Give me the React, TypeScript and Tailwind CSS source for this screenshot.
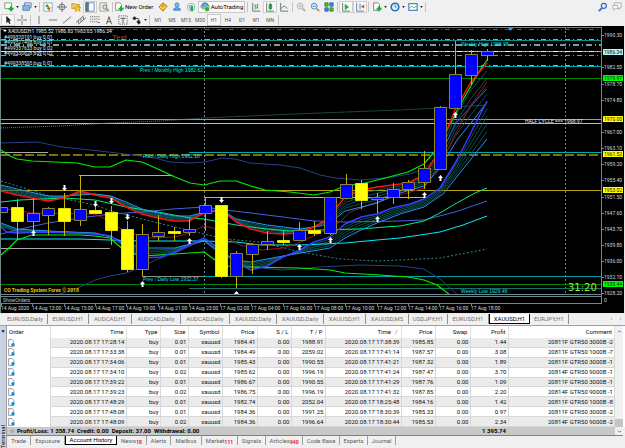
import type { ReactNode } from 'react';
import clsx from 'clsx';

type Point = [number, number];

interface Candle {
  x: number;
  open: number;
  close: number;
  high: number;
  low: number;
  up: boolean;
}

// [x, body top, body bottom, wick top, wick bottom, bullish]
const candleRows: [number, number, number, number, number, number][] = [
  [1, 208, 212, 207, 213, 1],
  [17, 208, 221, 199, 240, 0],
  [33, 214, 221, 198, 232, 1],
  [48, 209, 215, 207, 235, 1],
  [64, 209, 221, 193, 236, 0],
  [80, 210, 220, 175, 226, 1],
  [95, 211, 213, 203, 213, 0],
  [111, 213, 230, 206, 245, 0],
  [127, 230, 269, 221, 272, 0],
  [142, 235, 269, 224, 276, 1],
  [158, 233, 236, 215, 241, 1],
  [174, 232, 233, 227, 241, 0],
  [189, 230, 232, 219, 236, 1],
  [205, 206, 213, 198, 231, 1],
  [221, 206, 276, 205, 278, 0],
  [236, 254, 276, 251, 288, 1],
  [252, 245, 254, 243, 274, 1],
  [267, 242, 244, 231, 250, 1],
  [283, 241, 242, 231, 245, 0],
  [299, 231, 240, 222, 241, 1],
  [314, 231, 233, 221, 236, 0],
  [330, 198, 233, 197, 235, 1],
  [346, 185, 198, 174, 199, 1],
  [361, 184, 200, 180, 209, 0],
  [377, 198, 199, 193, 213, 1],
  [393, 190, 197, 183, 204, 1],
  [408, 183, 189, 180, 199, 1],
  [424, 169, 182, 151, 189, 1],
  [440, 108, 169, 106, 170, 1],
  [455, 75, 108, 41, 109, 1],
  [471, 55, 75, 50, 85, 1],
  [487, 52, 55, 49, 61, 1],
];

const candles: Candle[] = candleRows.map(([x, open, close, high, low, up]) => ({
  x, open, close, high, low, up: up === 1,
}));

const upperBand: Point[] = [[1, 143], [37, 142], [62, 147], [100, 151], [125, 154], [155, 158], [170, 162], [190, 163], [205, 162], [222, 158], [235, 159], [250, 163], [280, 165], [300, 168], [320, 175], [335, 178], [361, 180], [385, 178], [410, 174], [424, 169], [434, 160]];
const lowerBand: Point[] = [[57, 295], [80, 287], [95, 280], [110, 276], [126, 273], [142, 267], [155, 260], [175, 253], [190, 246], [204, 240], [220, 252], [236, 262], [251, 267], [283, 270], [320, 267], [360, 265], [400, 266], [424, 269], [440, 279], [458, 295]];
const greenTop: Point[] = [[1, 150], [8, 155], [17, 159], [32, 161], [77, 163], [95, 167], [110, 167], [126, 160], [142, 162], [160, 170], [175, 177], [190, 183], [204, 185], [220, 181], [236, 181], [251, 186], [265, 190], [290, 192], [314, 195], [330, 192], [345, 186], [365, 183], [385, 178], [408, 172], [424, 164], [434, 152], [447, 130], [460, 105], [480, 70], [487, 60]];
const greenBottom: Point[] = [[1, 255], [10, 247], [17, 240], [32, 235], [80, 235], [95, 236], [110, 238], [126, 252], [142, 256], [175, 254], [204, 252], [215, 260], [225, 266], [251, 267], [300, 268], [330, 270], [345, 273], [380, 275], [408, 277], [424, 280], [437, 285], [450, 295]];
const redFast: Point[] = [[1, 191], [17, 195], [32, 198], [48, 201], [64, 198], [80, 191], [95, 195], [111, 198], [126, 207], [142, 214], [158, 218], [173, 221], [189, 221], [204, 213], [222, 210], [236, 222], [251, 229], [267, 233], [283, 234], [298, 233], [314, 227], [325, 221], [336, 208], [345, 197], [361, 190], [377, 187], [408, 183], [424, 175], [440, 150], [447, 130], [455, 110], [471, 82], [487, 63]];
const redSlow: Point[] = [[1, 208], [32, 213], [95, 214], [111, 222], [126, 232], [150, 238], [175, 237], [190, 233], [204, 226], [213, 228], [225, 237], [240, 245], [262, 250], [283, 248], [298, 243], [320, 233], [340, 222], [350, 212], [377, 202], [400, 195], [424, 188], [440, 165], [455, 135], [471, 105], [487, 82]];
const springGreen: Point[] = [[1, 202], [20, 200], [64, 198], [95, 200], [126, 207], [158, 212], [190, 218], [204, 219], [236, 225], [267, 229], [290, 231], [320, 230], [360, 229], [385, 227], [400, 226], [424, 221], [440, 213], [455, 204], [475, 193], [487, 188]];
const cyanSlow: Point[] = [[1, 239], [80, 239], [110, 240], [142, 241], [204, 241], [236, 242], [260, 245], [300, 245], [345, 243], [377, 240], [400, 238], [440, 232], [463, 225], [487, 216]];
const steelBlue: Point[] = [[1, 234], [25, 228], [48, 223], [80, 218], [111, 214], [142, 212], [173, 209], [204, 207], [225, 210], [251, 213], [283, 217], [314, 221], [345, 222], [400, 221], [424, 220], [455, 212], [487, 201]];
const steelFast: Point[] = [[434, 170], [445, 145], [457, 122], [471, 106], [487, 89]];
const ribbonTop: Point[] = [[1, 185], [17, 189], [48, 196], [64, 196], [95, 194], [111, 196], [126, 202], [142, 209], [158, 213], [175, 216], [190, 216], [204, 212], [222, 210], [236, 219], [267, 225], [300, 229], [320, 226], [330, 223], [345, 211], [377, 203], [400, 193], [424, 186], [440, 168], [457, 140], [475, 118], [487, 102]];
const ribbonBlue: Point[] = [[1, 227], [7, 232], [17, 233], [48, 232], [95, 234], [111, 236], [126, 247], [142, 258], [160, 257], [175, 252], [204, 238], [220, 249], [236, 262], [251, 270], [267, 266], [283, 257], [298, 251], [314, 242], [330, 237], [345, 224], [361, 217], [377, 214], [392, 208], [410, 204], [424, 199], [440, 188], [457, 160], [487, 101]];
const ribbonLow: Point[] = [[1, 223], [17, 229], [48, 231], [95, 233], [111, 237], [126, 243], [142, 248], [175, 248], [190, 244], [204, 241], [220, 253], [236, 260], [251, 262], [283, 256], [330, 248], [345, 238], [361, 230], [377, 223], [400, 214], [424, 207], [443, 194], [487, 139]];
const dotsTop: Point[] = [[1, 128], [60, 126], [110, 123], [160, 121], [204, 118], [250, 116], [320, 113], [400, 110], [440, 108], [487, 105]];
const dotsBottom: Point[] = [[1, 181], [50, 196], [95, 205], [111, 211], [150, 221], [204, 234], [225, 239], [260, 242], [300, 252], [340, 259], [377, 261], [400, 260], [440, 258], [487, 249]];

const toPath = (points: Point[]) => points.map((p) => p.join(',')).join(' ');

const valueAt = (points: Point[], x: number) => {
  const i = points.findIndex((p) => p[0] >= x);
  if (i <= 0) return points[0][1];
  const [x0, y0] = points[i - 1];
  const [x1, y1] = points[i];
  return y0 + ((y1 - y0) * (x - x0)) / (x1 - x0);
};

// averages that run between two moving averages
const between = (a: Point[], b: Point[], t: number): Point[] =>
  candles.map(({ x }) => [x, Math.round((valueAt(a, x) * (1 - t) + valueAt(b, x) * t) * 10) / 10]);

const prices: [string, number][] = [
  ['1990.30', 35], ['1982.50', 67], ['1978.70', 84], ['1974.80', 100], ['1967.00', 132],
  ['1963.10', 148], ['1959.20', 164], ['1955.40', 180], ['1951.50', 197], ['1947.60', 213], ['1943.70', 229],
  ['1939.80', 245], ['1936.00', 261], ['1932.10', 277], ['1928.20', 293],
];

const priceTags: [string, number, string][] = [
  ['1986.34', 52, '#b0f0f8'],
  ['1979.97', 78, '#00ff00'],
  ['1970.00', 119, '#ffff00'],
  ['1961.52', 154, '#ffff00'],
  ['1953.02', 190, '#ffff00'],
  ['1930.44', 284, '#00ff00'],
];

const times = [
  '14 Aug 2020', '14 Aug 13:00', '14 Aug 15:00', '14 Aug 17:00', '14 Aug 19:00', '14 Aug 21:00', '14 Aug 23:00',
  '17 Aug 02:00', '17 Aug 04:00', '17 Aug 06:00', '17 Aug 08:00', '17 Aug 10:00', '17 Aug 12:00', '17 Aug 14:00',
  '17 Aug 16:00', '17 Aug 18:00',
];

const orders: [string, number][] = [
  ['#499320191 buy 0.01', 37],
  ['#499327498 buy 0.01', 42],
  ['#499337633 buy 0.02', 48],
  ['#499330628 buy 0.02', 53],
  ['#499338595 buy 0.01', 63],
];

const levels: { y: number; x1?: number; x2?: number; color: string; dash?: string; width?: number }[] = [
  { y: 29.5, color: '#a83c14', dash: '5 3 1 3' },
  { y: 40.5, color: '#0c8c8c' },
  { y: 39.5, color: '#8fb0b0', dash: '5 3 1 3' },
  { y: 45, color: '#7d9c9c', dash: '6 3 1 3', width: 2 },
  { y: 51.5, color: '#68b4d0' },
  { y: 51.5, color: '#d8f4ff', dash: '5 3 1 3' },
  { y: 55.5, color: '#7d9c9c', dash: '5 3 1 3' },
  { y: 65.5, color: '#8fb0b0', dash: '5 3 1 3' },
  { y: 66.5, color: '#00a8a8' },
  { y: 78.5, color: '#008400' },
  { y: 119.5, color: '#b8a810' },
  { y: 123.5, color: '#c0b8c0' },
  { y: 152.5, x2: 48, color: '#a8a8a8' },
  { y: 152.5, x1: 189, color: '#00a8b0' },
  { y: 155, color: '#7c7400', dash: '9 3', width: 2 },
  { y: 175.5, x1: 79, x2: 173, color: '#b0b0b0' },
  { y: 190.5, color: '#b8a810' },
  { y: 197.5, x1: 204, x2: 424, color: '#b0b0b0' },
  { y: 248.5, x2: 110, color: '#a8a8a8' },
  { y: 276.5, x1: 142, x2: 204, color: '#909090' },
  { y: 276.5, x1: 204, color: '#00a0a8' },
  { y: 284.5, color: '#008400' },
  { y: 288.5, x1: 189, color: '#187070' },
];

const sellArrows: Point[] = [[64, 188], [95, 204], [111, 201], [127, 217], [221, 200]];
const buyArrows: Point[] = [[33, 233], [142, 284], [189, 241], [236, 294], [299, 247], [330, 240], [377, 219], [424, 195], [440, 178], [455, 115]];

const Line = ({ points, color, width = 1, dash }: { points: Point[]; color: string; width?: number; dash?: string }) => (
  <polyline points={toPath(points)} fill="none" stroke={color} strokeWidth={width} strokeDasharray={dash} strokeLinejoin="round" />
);

function PriceChart() {
  return (
    <svg viewBox="0 26 625 288" className="block w-full bg-black" fontFamily="Roboto, sans-serif" fontSize="5">
      <clipPath id="plot"><rect x="1" y="27" width="601" height="268" /></clipPath>
      <g clipPath="url(#plot)">
        <path d="M204.5 27V295M565.5 27V295" stroke="#6c8490" strokeDasharray="2 2" />
        {levels.map((l, i) => (
          <path key={i} d={`M${l.x1 ?? 1} ${l.y}H${l.x2 ?? 602}`} stroke={l.color} strokeDasharray={l.dash} strokeWidth={l.width ?? 1} />
        ))}

        {/* Ribbons */}
        {[0.2, 0.4, 0.6, 0.8].map((t) => (
          <g key={t}>
            <Line points={between(redFast, ribbonTop, t)} color="#0f686c" width={0.8} />
            <Line points={between(ribbonBlue, ribbonLow, t)} color="#0f6460" width={0.8} />
          </g>
        ))}
        <Line points={upperBand} color="#24408c" />
        <Line points={lowerBand} color="#24408c" />
        <Line points={dotsTop} color="#2a8c8c" dash="1 1" />
        <Line points={dotsBottom} color="#2a8c8c" dash="2 2" />
        <Line points={cyanSlow} color="#00f0f8" />
        <Line points={steelBlue} color="#3c64e0" />
        <Line points={steelFast} color="#2c58c0" />
        <Line points={springGreen} color="#00f080" />
        <Line points={redSlow} color="#a01414" />
        <Line points={ribbonTop} color="#2494f8" />
        <Line points={ribbonLow} color="#2494f8" />
        <Line points={greenTop} color="#00f000" width={1.2} />
        <Line points={greenBottom} color="#00f000" width={1.2} />
        <Line points={ribbonBlue} color="#3c3cff" width={1.5} />
        <Line points={redFast} color="#ff1010" width={1.5} />

        {/* Candles */}
        {candles.map((c) => (
          <g key={c.x}>
            <path d={`M${c.x + 0.5} ${c.high}V${c.low}`} stroke="#c4b400" />
            <path d={`M${c.x - 5.5} ${c.open - 0.5}h12v${c.close - c.open + 1}h-12z`} fill={c.up ? '#0000ff' : '#ffff00'} stroke={c.up ? '#8c8430' : '#e8e000'} />
          </g>
        ))}

        {/* Trade arrows */}
        {sellArrows.map(([x, y]) => (
          <path key={x} d={`M${x - 0.5} ${y - 3}h2v3h1.5l-2.5 3l-2.5 -3h1.5z`} fill="#fff" />
        ))}
        {buyArrows.map(([x, y]) => (
          <path key={x} d={`M${x - 0.5} ${y + 3}h2v-3h1.5l-2.5 -3l-2.5 3h1.5z`} fill="#fff" />
        ))}
        <path d="M508 28h5l-2.500 3z" fill="#4c9ce0" />

        {/* Labels */}
        <path d="M3 30h4l-2 2z" fill="#fff" />
        <text x="8" y="33" fill="#e8f4f4">XAUUSD,H1 1985.52 1986.83 1983.65 1986.34</text>
        {orders.map(([label, y]) => (
          <text key={label} x="4" y={y + 2} fill="#d8ecec">{label}</text>
        ))}
        <text x="112" y="40" fill="#a04c14" fontSize="8" fontFamily='"Liberation Sans", sans-serif'>Text</text>
        <g fill="#00e4e4" fontFamily='"Liberation Sans", sans-serif'>
          <text x="140" y="72">Prev / Monthly High 1982.62</text>
          <text x="143" y="158">Prev / Daily High 1962.10</text>
          <text x="143" y="281">Prev / Daily Low 1932.37</text>
          <text x="461" y="46">Weekly High 1988.98</text>
          <text x="461" y="293">Weekly Low 1929.48</text>
        </g>
        <text x="525" y="123" fill="#e8e8e8">HALF CYCLE === 1968.97</text>
        <text x="4" y="292" fill="#f0c000" fontWeight="bold">CO Trading System Forex © 2018</text>
        <text x="568" y="291" fill="#a0e828" fontSize="10" fontFamily='"DejaVu Sans", sans-serif'>31:20</text>
      </g>

      {/* Frame, indicator window and axes */}
      <path d="M0.5 314V27.500H602M0 294.500H602M0 296.500H602M0 303.500H602M601.500 27V304" fill="none" stroke="#70888c" />
      <text x="3" y="302" fill="#b8c8c8">ShowOrders</text>
      <text x="604" y="302" fill="#c8dcdc">0</text>
      {prices.map(([label, y]) => (
        <g key={label}>
          <path d={`M602 ${y + 0.5}h2`} stroke="#70888c" />
          <text x="604" y={y + 2} fill="#c8dcdc">{label}</text>
        </g>
      ))}
      {priceTags.map(([label, y, color]) => (
        <g key={label}>
          <rect x="603" y={y - 3} width="20" height="6" fill={color} />
          <text x="604" y={y + 2} fill="#101810">{label}</text>
        </g>
      ))}
      {times.map((label, i) => {
        const x = Math.round(1 + i * 31.3);
        return (
          <g key={label}>
            <path d={`M${x + 0.5} 303v3`} stroke="#70888c" />
            <text x={x} y="310" fill="#c8dcdc">{label}</text>
          </g>
        );
      })}
      <path d="M624.500 26V314M0 313.500H625" stroke="#e8e8e8" />
    </svg>
  );
}

const Icon = ({ children }: { children: ReactNode }) => (
  <svg viewBox="0 0 12 12" className="block size-[10px] shrink-0" fill="none" stroke="#606060">{children}</svg>
);

const Caret = () => (
  <svg viewBox="0 0 4 3" className="ml-[2px] block h-[2px] w-[3px] shrink-0"><path d="M0 0h4l-2 3z" fill="#202020" /></svg>
);

const Separator = () => <span className="mx-px h-[10px] w-px shrink-0 bg-[#c4c4c4]" />;

interface ToolProps {
  label: string;
  menu?: boolean;
  active?: boolean;
  children: ReactNode;
}

const Tool = ({ label, menu, active, children }: ToolProps) => (
  <button
    type="button"
    aria-label={label}
    className={clsx('flex h-[12px] shrink-0 items-center justify-center', menu ? 'w-[18px]' : 'w-[14px]', active && 'border border-[#d0d0d0] bg-[#f8f8f8]')}
  >
    <Icon>{children}</Icon>
    {menu && <Caret />}
  </button>
);

const plus = <path d="M8.500 5v6M5.500 8h6" stroke="#18b030" strokeWidth="2.500" />;

function MainToolbar() {
  return (
    <div className="flex h-[13px] items-center pl-[2px]">
      <Tool label="New chart" menu><path d="M1 1h8v7H1z" fill="#fff" stroke="#709060" />{plus}</Tool>
      <Tool label="Profiles" menu><path d="M3 1h8v6H3z" fill="#cfe0f4" stroke="#5880b0" /><path d="M1 4h8v6H1z" fill="#8cb4e0" stroke="#5880b0" /></Tool>
      <Separator />
      <Tool label="Market watch"><path d="M1 1h10v10H1z" fill="#fff" stroke="#78a0c8" /><path d="M3 5l2-2 2 3z" fill="#30a030" stroke="#30a030" /><path d="M5 7h4l-2 3z" fill="#e05020" stroke="#e05020" /></Tool>
      <Tool label="Data window"><circle cx="6" cy="6" r="3.500" /><path d="M6 0v12M0 6h12" /></Tool>
      <Tool label="Navigator"><path d="M1 2h4l1 1h4v5H1z" fill="#f4d060" stroke="#c89020" /><path d="M8 4l1 2.500h3l-2 2 1 3-3-2-3 2 1-3-2-2h2z" fill="#ffc830" stroke="#c89020" strokeWidth="0.800" /></Tool>
      <Tool label="Terminal" active><path d="M1 1h10v10H1z" fill="#fff" stroke="#4880c0" /><path d="M1 1h3v10H1z" fill="#4880c0" /></Tool>
      <Tool label="Strategy tester"><path d="M1 1h8v10H1z" fill="#f4ecd8" stroke="#a89878" /><circle cx="7" cy="6" r="2.500" fill="#c8e4f8" stroke="#4080c0" /><path d="M9 8l3 3" stroke="#c89020" strokeWidth="2" /></Tool>
      <Separator />
      <button type="button" className="flex h-[12px] w-[42px] shrink-0 items-center gap-px whitespace-nowrap">
        <Icon><path d="M2 1h5l2 2v7H2z" fill="#fff" stroke="#808080" />{plus}</Icon>
        New Order
      </button>
      <Tool label="MetaEditor"><path d="M6 1l5 4-5 6-5-5z" fill="#e8b020" stroke="#a87010" /><path d="M2 6l4 2 4-3" stroke="#fff0a0" /></Tool>
      <Tool label="Community"><circle cx="6" cy="3.500" r="2.500" fill="#80b8e8" stroke="#4888c8" /><path d="M2 8q4-3 8 0v2H2z" fill="#60a0e0" stroke="#4888c8" /></Tool>
      <Tool label="Signals"><circle cx="6" cy="6" r="4.500" stroke="#90a8c0" /><circle cx="6" cy="6" r="2" stroke="#4898d0" /><path d="M7 5v6" stroke="#20b040" strokeWidth="3" /></Tool>
      <button type="button" className="flex h-[12px] w-[47px] shrink-0 items-center justify-center gap-px border border-[#c8c8c8] bg-[#f8f8f8] whitespace-nowrap">
        <Icon><path d="M1 6q4 5 10 0l-2-4q-3-2-6 0z" fill="#60a8e0" stroke="#2878b8" /><path d="M1 6l5 2 5-2" stroke="#e0b020" strokeWidth="2" /><circle cx="8.500" cy="8.500" r="3" fill="#20b040" stroke="#fff" strokeWidth="0.600" /></Icon>
        AutoTrading
      </button>
      <span className="w-px shrink-0" />
      <Separator />
      <Tool label="Bar chart"><path d="M2 1v10h9" /><path d="M5 3v6M5 4h2M8 2v6M6 7h2" stroke="#20a040" /></Tool>
      <Tool label="Candlesticks" active><path d="M2 1v10h9" /><path d="M5 3h3v5H5zM6.500 1v9" fill="#20c040" stroke="#209040" /></Tool>
      <Tool label="Line chart"><path d="M2 1v10h9" /><path d="M3 8q3-6 7 0" stroke="#20a040" /></Tool>
      <Separator />
      <Tool label="Zoom in"><circle cx="5" cy="5" r="3.500" fill="#f4f4f4" stroke="#a8a8a8" /><path d="M3 5h4M5 3v4" stroke="#a8a8a8" /><path d="M8 8l3 3" stroke="#b0a8a0" strokeWidth="2" /></Tool>
      <Tool label="Zoom out"><circle cx="5" cy="5" r="3.500" fill="#d8ecfc" stroke="#3880c8" /><path d="M3 5h4" stroke="#3880c8" /><path d="M8 8l3 3" stroke="#c89020" strokeWidth="2" /></Tool>
      <Tool label="Tile windows"><path d="M1 1h4v4H1zM7 7h4v4H7z" fill="#60b030" stroke="#408818" /><path d="M7 1h4v4H7zM1 7h4v4H1z" fill="#4888d8" stroke="#2060b0" /></Tool>
      <Separator />
      <Tool label="Auto scroll" active><path d="M2 1v10h9" /><path d="M5 3l4 3-4 3z" fill="#20b040" stroke="#20b040" /></Tool>
      <Tool label="Chart shift" active><path d="M2 1v10h9M6 2v7" stroke="#4070a0" /><path d="M11 3L7 5.500 11 8z" fill="#d06030" stroke="none" /></Tool>
      <Separator />
      <Tool label="Indicators" menu><path d="M2 1h5l2 2v7H2z" fill="#fff" stroke="#707070" />{plus}</Tool>
      <Tool label="Periods" menu><circle cx="6" cy="6" r="4.500" fill="#e8f4fc" stroke="#2070c0" strokeWidth="2" /><path d="M6 3v3h2" /></Tool>
      <Tool label="Templates" menu><path d="M1 2h10v8H1z" fill="#fff" stroke="#5088c0" strokeWidth="1.500" /><path d="M2 7l3-2 2 2 3-2" stroke="#40a040" /></Tool>
      <Separator />
      <span className="grow" />
      <Tool label="Search"><circle cx="7" cy="4.500" r="3" stroke="#3868c8" strokeWidth="1.500" /><path d="M5 7l-4 4" stroke="#3868c8" strokeWidth="2" /></Tool>
      <Tool label="Chat"><path d="M3 1h8v6H9v2L7 7H3z" fill="#f8f8f8" stroke="#a8a8a8" /><path d="M1 4h6v4H4l-2 2V8H1z" fill="#f8f8f8" stroke="#a8a8a8" /></Tool>
      <span className="w-px shrink-0" />
    </div>
  );
}

const periods = ['M1', 'M5', 'M15', 'M30', 'H1', 'H4', 'D1', 'W1', 'MN'];

function DrawingToolbar() {
  return (
    <div className="flex h-[13px] items-center pl-px text-[#505050]">
      <Tool label="Cursor" active><path d="M4 1v9l2-2 2 3 1-1-1.500-3H10z" fill="#202020" stroke="none" /></Tool>
      <Tool label="Crosshair"><path d="M6 0v5M6 7v5M0 6h5M7 6h5" /></Tool>
      <Separator />
      <Tool label="Vertical line"><path d="M6 1v10" /></Tool>
      <Tool label="Horizontal line"><path d="M1 6h10" /></Tool>
      <Tool label="Trendline"><path d="M1 10L11 2" /></Tool>
      <Tool label="Channel"><path d="M0 9L9 1M3 11l9-8M3 6v4M6 4v4M9 2v4" /></Tool>
      <Tool label="Fibonacci"><path d="M0 2h12M0 5h12M0 8h9" strokeDasharray="1.500 1" /><path d="M9 9h3" /></Tool>
      <Tool label="Text"><path d="M3 11L6 2l3 9M4 8h4" stroke="#404040" /></Tool>
      <Tool label="Text label"><path d="M1 1h10v10H1z" strokeDasharray="1.500 1" /><path d="M3 4h6M6 4v6" stroke="#404040" /></Tool>
      <Tool label="Arrows" menu><path d="M1 4l2-2 2 2-2 2zM6 8l2-2 2 3-2 2zM5 4l4 1" fill="#202020" stroke="#202020" /></Tool>
      <Separator />
      {periods.map((period) => (
        <button
          key={period}
          type="button"
          className={clsx('flex h-[12px] w-[14px] shrink-0 items-center justify-center text-[5px]', period === 'H1' && 'border border-[#c8c8c8] bg-[#f8f8f8]')}
        >
          {period}
        </button>
      ))}
      <Separator />
    </div>
  );
}

const chartTabs: { name: string; width: string; active?: boolean }[] = [
  { name: 'EURUSD,Daily', width: 'w-[45px]' },
  { name: 'EURUSD,H1', width: 'w-[41px]' },
  { name: 'AUDCAD,H1', width: 'w-[43px]' },
  { name: 'AUDCAD,Daily', width: 'w-[49px]' },
  { name: 'AUDCAD,Daily', width: 'w-[49px]' },
  { name: 'XAUUSD,Daily', width: 'w-[47px]' },
  { name: 'XAUUSD,Daily', width: 'w-[47px]' },
  { name: 'XAUUSD,H1', width: 'w-[42px]' },
  { name: 'XAUUSD,M5', width: 'w-[43px]' },
  { name: 'USDJPY,H1', width: 'w-[39px]' },
  { name: 'EURUSD,H1', width: 'w-[41px]' },
  { name: 'XAUUSD,H1', width: 'w-[41px]', active: true },
  { name: 'EURJPY,H1', width: 'w-[39px]' },
];

function ChartTabs() {
  return (
    <div className="flex h-[12px] items-start border-b border-[#a0a0a0] pl-[3px] text-[#707070]">
      {chartTabs.map(({ name, width, active }, i) => (
        <button
          key={i}
          type="button"
          className={clsx(
            'h-[10px] shrink-0 whitespace-nowrap',
            width,
            active ? 'border border-t-0 border-black bg-white text-black' : 'border-r border-[#909090]',
          )}
        >
          {name}
        </button>
      ))}
      <span className="grow" />
      <button type="button" aria-label="Scroll tabs left" className="w-[9px]">‹</button>
      <button type="button" aria-label="Scroll tabs right" className="w-[9px]">›</button>
    </div>
  );
}

const columns: [string, string][] = [
  ['Order', 'w-[43px]'], ['Time', 'w-[76px]'], ['Type', 'w-[34px]'], ['Size', 'w-[28px]'], ['Symbol', 'w-[34px]'],
  ['Price', 'w-[35px]'], ['S / L', 'w-[34px]'], ['T / P', 'w-[34px]'], ['Time', 'w-[76px]'], ['Price', 'w-[34px]'],
  ['Swap', 'w-[35px]'], ['Profit', 'w-[38px]'], ['Comment', ''],
];

const trades: string[][] = [
  ['2020.08.17 17:28:14', 'buy', '0.01', 'xauusd', '1984.41', '0.00', '1988.91', '2020.08.17 17:38:39', '1985.85', '0.00', '1.44', '20811F GTR50 3000B -2'],
  ['2020.08.17 17:33:38', 'buy', '0.01', 'xauusd', '1984.49', '0.00', '2059.02', '2020.08.17 17:41:14', '1987.57', '0.00', '3.08', '20811F GTR50 1000B -7'],
  ['2020.08.17 17:34:06', 'buy', '0.01', 'xauusd', '1985.43', '0.00', '1990.55', '2020.08.17 17:41:21', '1987.32', '0.00', '1.89', '20811F GTR50 3000B -1'],
  ['2020.08.17 17:34:10', 'buy', '0.02', 'xauusd', '1985.62', '0.00', '1996.19', '2020.08.17 17:41:24', '1987.47', '0.00', '3.70', '20814F GTR50 9000B -1'],
  ['2020.08.17 17:39:22', 'buy', '0.01', 'xauusd', '1986.67', '0.00', '1990.55', '2020.08.17 17:41:29', '1987.76', '0.00', '1.09', '20811F GTR50 3000B -1'],
  ['2020.08.17 17:39:23', 'buy', '0.02', 'xauusd', '1986.75', '0.00', '1996.19', '2020.08.17 17:41:32', '1987.85', '0.00', '2.20', '20814F GTR50 9000B -1'],
  ['2020.08.17 17:48:29', 'buy', '0.01', 'xauusd', '1982.74', '0.00', '2052.04', '2020.08.17 18:25:48', '1984.16', '0.00', '1.42', '20811F GTR50 1000B -8'],
  ['2020.08.17 17:48:08', 'buy', '0.01', 'xauusd', '1984.36', '0.00', '1991.25', '2020.08.17 18:30:39', '1985.33', '0.00', '0.97', '20811F GTR50 3000B -2'],
  ['2020.08.17 17:48:09', 'buy', '0.02', 'xauusd', '1984.36', '0.00', '1996.64', '2020.08.17 18:30:44', '1985.53', '0.00', '2.34', '20814F GTR50 9000B -2'],
];

const terminalTabs: { name: string; width: string; count?: number }[] = [
  { name: 'Trade', width: 'w-[24px]' },
  { name: 'Exposure', width: 'w-[34px]' },
  { name: 'Account History', width: 'w-[52px]' },
  { name: 'News', width: 'w-[30px]', count: 18 },
  { name: 'Alerts', width: 'w-[24px]' },
  { name: 'Mailbox', width: 'w-[31px]' },
  { name: 'Market', width: 'w-[36px]', count: 111 },
  { name: 'Signals', width: 'w-[28px]' },
  { name: 'Articles', width: 'w-[37px]', count: 940 },
  { name: 'Code Base', width: 'w-[37px]' },
  { name: 'Experts', width: 'w-[28px]' },
  { name: 'Journal', width: 'w-[28px]' },
];

function Terminal() {
  return (
    <section className="flex h-[122px]">
      <aside className="flex w-[6px] shrink-0 flex-col items-center justify-between bg-[#c8d4e4]">
        <button type="button" aria-label="Close" className="mt-px font-bold text-black">×</button>
        <span className="rotate-180 text-black [writing-mode:vertical-rl]">Terminal</span>
      </aside>
      <div className="flex min-w-0 grow flex-col border-l border-[#a0a0a0]">
        <div className="flex h-[101px] bg-white">
          <table className="h-[101px] min-w-0 grow table-fixed border-collapse text-right text-[#101010]">
            <thead>
              <tr className="h-[12px]">
                {columns.map(([name, width], i) => (
                  <th key={i} scope="col" className={clsx('border-r border-[#e0e0e0] px-[2px] font-normal whitespace-nowrap', width, i === 0 && 'text-left')}>
                    {name}
                    {i === 8 && <span className="pr-px pl-[4px] text-[#808080]">/</span>}
                  </th>
                ))}
              </tr>
            </thead>
            <tbody>
              {trades.map((trade, row) => (
                <tr key={row} className={clsx(row % 2 === 0 && 'bg-[#ebebeb]')}>
                  <td className="border-r border-[#d8d8d8] bg-white pl-px">
                    <svg viewBox="0 0 12 14" className="block h-[8px] w-[7px]">
                      <path d="M1 1h6l3 3v9H1z" fill="#fff" stroke="#505860" />
                      <circle cx="8.500" cy="10" r="3" fill="#1890d8" />
                    </svg>
                  </td>
                  {trade.map((value, i) => (
                    <td key={i} className="border-r border-b border-[#d8d8d8] px-px whitespace-nowrap">{value}</td>
                  ))}
                </tr>
              ))}
            </tbody>
          </table>
          <div className="mr-[2px] flex w-[8px] shrink-0 flex-col items-center justify-between bg-[#f0f0f0]">
            <svg viewBox="0 0 6 4" className="mt-[4px] h-[3px] w-[5px]"><path d="M1 3l2-2 2 2" fill="none" stroke="#404040" /></svg>
            <span className="h-[8px] w-full bg-[#c4c4c4]" />
          </div>
        </div>
        <div className="mr-[2px] flex h-[9px] items-center border-b border-[#808080] bg-[#c8c8c8] font-bold text-black">
          <span className="w-[10px] text-center font-normal">○</span>
          <span className="grow whitespace-pre">Profit/Loss: 1 358.74  Credit: 0.00  Deposit: 37.00  Withdrawal: 0.00</span>
          <span className="mr-[109px]">1 395.74</span>
          <span className="flex h-full w-[8px] items-center justify-center bg-[#f0f0f0]">
            <svg viewBox="0 0 6 4" className="h-[3px] w-[5px]"><path d="M1 1l2 2 2-2" fill="none" stroke="#404040" /></svg>
          </span>
        </div>
        <nav className="flex h-[12px] items-start text-[#606060]">
          {terminalTabs.map(({ name, width, count }) => (
            <button
              key={name}
              type="button"
              className={clsx(
                'h-[9px] shrink-0 whitespace-nowrap',
                width,
                name === 'Account History' ? 'border border-t-0 border-black bg-white text-black' : 'border-r border-[#a0a0a0]',
              )}
            >
              {name}
              {count && <sub className="text-[5px] font-bold text-[#e02020]">{count}</sub>}
            </button>
          ))}
        </nav>
      </div>
    </section>
  );
}

export default function App() {
  return (
    <main className="min-h-screen bg-[#f0f0f0] [font-family:Roboto,sans-serif] text-[6px] leading-[8px] text-black">
      <MainToolbar />
      <DrawingToolbar />
      <PriceChart />
      <ChartTabs />
      <Terminal />
    </main>
  );
}
